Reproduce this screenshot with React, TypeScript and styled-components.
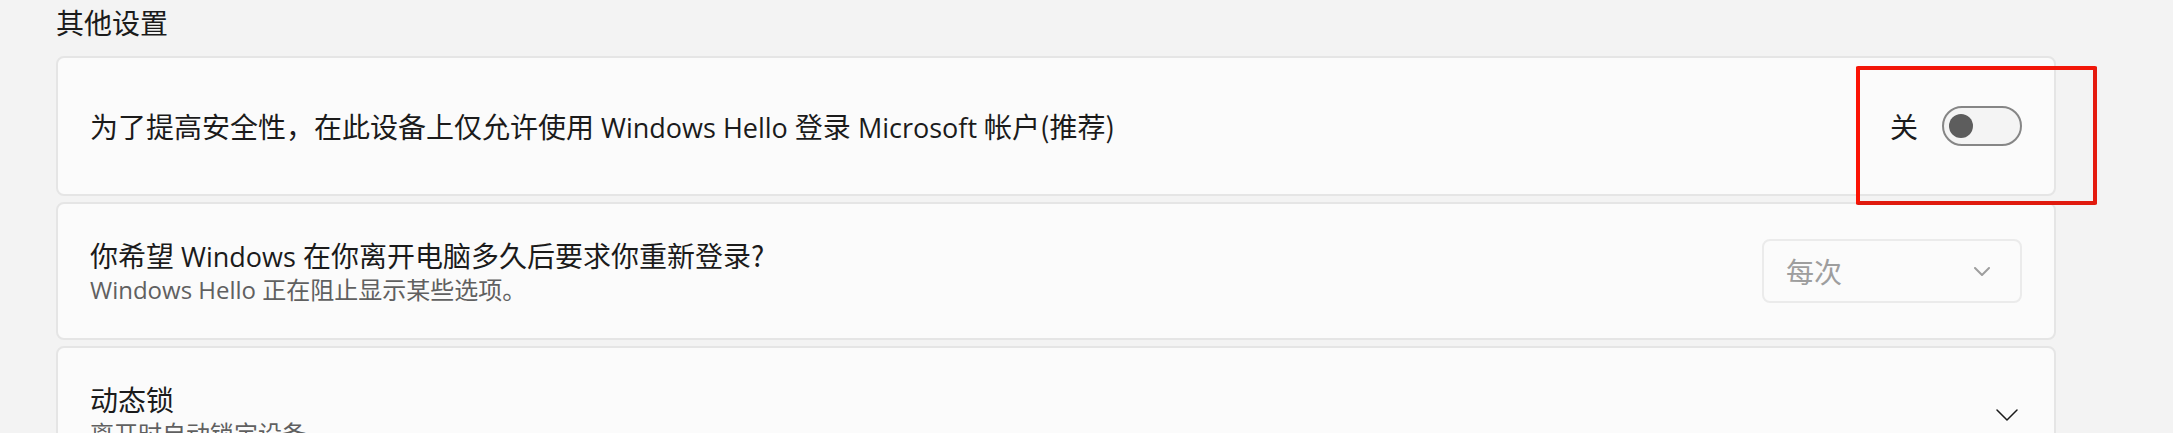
import React from "react";
import styled, { createGlobalStyle } from "styled-components";

const GlobalStyle = createGlobalStyle`
  *, *::before, *::after {
    box-sizing: border-box;
  }

  body {
    margin: 0;
    background: #f3f3f3;
    color: #1b1b1b;
    font-family: "Noto Sans CJK SC", sans-serif;
    font-size: 28px;
    line-height: 36px;
    scrollbar-width: none;
  }
`;

const Page = styled.main`
  padding: 4px 117px 32px 56px;
`;

const SectionTitle = styled.h2`
  margin: 0 0 16px;
  font-size: 28px;
  font-weight: 400;
  line-height: 36px;
`;

const CardList = styled.div`
  display: flex;
  flex-direction: column;
  gap: 6px;
`;

const Card = styled.div<{ $tall?: boolean }>`
  position: relative;
  display: flex;
  align-items: center;
  justify-content: space-between;
  width: 100%;
  min-height: ${({ $tall }) => ($tall ? 140 : 138)}px;
  padding: 0 32px;
  border: 2px solid #e5e5e5;
  border-radius: 8px;
  background: #fbfbfb;
  color: inherit;
  font: inherit;
  text-align: left;
`;

const CardText = styled.span`
  display: flex;
  flex-direction: column;
`;

const Title = styled.label`
  line-height: 36px;
`;

const Description = styled.span`
  color: #606060;
  font-size: 24px;
  line-height: 32px;
`;

const Latin = styled.span<{ $small?: boolean }>`
  font-family: "Open Sans", sans-serif;
  font-size: ${({ $small }) => ($small ? 24 : 27)}px;
  line-height: 1;
`;

const SwitchGroup = styled.span`
  display: flex;
  align-items: center;
  gap: 24px;
`;

const Switch = styled.input`
  appearance: none;
  display: flex;
  align-items: center;
  width: 80px;
  height: 40px;
  margin: 0;
  padding: 0 5px;
  border: 2px solid #868686;
  border-radius: 20px;
  background: #f4f4f4;

  &::before {
    content: "";
    width: 24px;
    height: 24px;
    border-radius: 50%;
    background: #5d5d5d;
  }

  &:checked {
    justify-content: flex-end;
  }
`;

const SelectBox = styled.span`
  display: grid;
  align-items: center;
  width: 260px;

  > * {
    grid-area: 1 / 1;
  }

  > svg {
    justify-self: end;
    margin-right: 32px;
    pointer-events: none;
  }
`;

const Select = styled.select`
  appearance: none;
  width: 100%;
  height: 64px;
  padding: 0 22px;
  border: 2px solid #ebebeb;
  border-radius: 8px;
  background: #fbfbfb;
  color: #9e9e9e;
  font: inherit;
  opacity: 1;
`;

const Expander = styled(Card).attrs({ as: "button", type: "button" })``;

const ExpanderIcon = styled.span`
  display: flex;
  padding-right: 4px;
`;

const Highlight = styled.span`
  position: absolute;
  top: 8px;
  right: -43px;
  z-index: 1;
  width: 241px;
  height: 139px;
  border: 4px solid;
  border-color: #f21608 #e41a0e #e01a0e #fb1304;
  border-radius: 2px;
  pointer-events: none;
`;

type ChevronProps = { width: number; color: string; stroke: number };

function Chevron({ width, color, stroke }: ChevronProps) {
  return (
    <svg
      width={width}
      height={width / 2 + 1}
      viewBox={`0 0 ${width} ${width / 2 + 1}`}
      fill="none"
      stroke={color}
      strokeWidth={stroke}
      strokeLinecap="round"
      strokeLinejoin="round"
      aria-hidden="true"
    >
      <path d={`M1 1 L${width / 2} ${width / 2} L${width - 1} 1`} />
    </svg>
  );
}

export default function App() {
  return (
    <>
      <GlobalStyle />
      <Page>
        <SectionTitle>其他设置</SectionTitle>
        <CardList>
          <Card $tall>
            <Title htmlFor="hello-only">
              为了提高安全性，在此设备上仅允许使用<Latin> Windows Hello </Latin>登录
              <Latin> Microsoft </Latin>帐户(推荐)
            </Title>
            <SwitchGroup>
              <span>关</span>
              <Switch id="hello-only" type="checkbox" role="switch" />
            </SwitchGroup>
            <Highlight />
          </Card>
          <Card>
            <CardText>
              <Title htmlFor="sign-in-delay">
                你希望<Latin> Windows </Latin>在你离开电脑多久后要求你重新登录?
              </Title>
              <Description>
                <Latin $small>Windows Hello </Latin>正在阻止显示某些选项。
              </Description>
            </CardText>
            <SelectBox>
              <Select id="sign-in-delay" disabled defaultValue="every">
                <option value="every">每次</option>
              </Select>
              <Chevron width={16} color="#9e9e9e" stroke={2} />
            </SelectBox>
          </Card>
          <Expander aria-expanded={false}>
            <CardText>
              <Title as="span">动态锁</Title>
              <Description>离开时自动锁定设备</Description>
            </CardText>
            <ExpanderIcon>
              <Chevron width={22} color="#1b1b1b" stroke={1.5} />
            </ExpanderIcon>
          </Expander>
        </CardList>
      </Page>
    </>
  );
}
